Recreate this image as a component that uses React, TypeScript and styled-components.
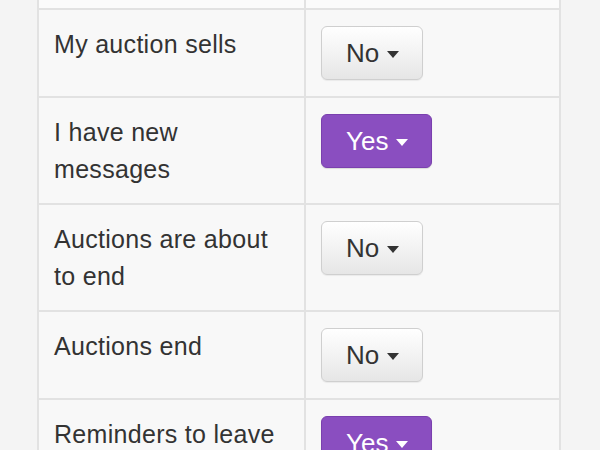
import * as React from 'react'
import styled, {createGlobalStyle} from 'styled-components'

const Global = createGlobalStyle`
  html, body {
    margin: 0;
    padding: 0;
    background: #f4f4f4;
    font-family: "Liberation Sans", Arial, Helvetica, sans-serif;
    color: #333;
  }
`

const Page = styled.div`
  height: 450px;
  overflow: hidden;
`

const Table = styled.div`
  margin-left: 37px;
  width: 524px;
  box-sizing: border-box;
  border-left: 2px solid #e2e2e2;
  border-right: 2px solid #e2e2e2;
`

const Row = styled.div<{$stub?: boolean}>`
  display: grid;
  grid-template-columns: 267px 1fr;
  border-bottom: 2px solid #e2e2e2;
  background: ${p => (p.$stub ? '#fbfbfb' : '#f8f8f8')};
  height: ${p => (p.$stub ? '8px' : 'auto')};
`

const Label = styled.div<{$empty?: boolean}>`
  border-right: 2px solid #e2e2e2;
  padding: ${p => (p.$empty ? '0' : '16px 14px 16px 15px')};
  font-size: 25px;
  letter-spacing: 0.3px;
  line-height: 36.5px;
`

const Control = styled.div`
  padding: 16px 16px 16px 15px;
`

const Toggle = styled.button<{$on: boolean}>`
  display: inline-flex;
  align-items: center;
  box-sizing: border-box;
  height: 54px;
  padding: 0 23px 0 24px;
  border-radius: 6px;
  font-family: inherit;
  font-size: 26px;
  line-height: 36px;
  cursor: pointer;
  border: 1px solid ${p => (p.$on ? '#7a40ae' : '#cfcfcf')};
  color: ${p => (p.$on ? '#fff' : '#333')};
  background: ${p => (p.$on ? '#8a4ec0' : 'linear-gradient(to bottom, #ffffff 0%, #e6e6e6 100%)')};
  box-shadow: ${p => (p.$on ? '0 1px 1px rgba(0,0,0,0.12)' : 'inset 0 1px 0 rgba(255,255,255,0.15), 0 1px 1px rgba(0,0,0,0.06)')};
`

const Caret = styled.span`
  display: inline-block;
  width: 0;
  height: 0;
  margin-left: 8px;
  margin-top: 2px;
  border-top: 7px solid currentColor;
  border-left: 6.5px solid transparent;
  border-right: 6.5px solid transparent;
`

const settings: {label: string; on: boolean}[] = [
  {label: 'My auction sells', on: false},
  {label: 'I have new messages', on: true},
  {label: 'Auctions are about to end', on: false},
  {label: 'Auctions end', on: false},
  {label: 'Reminders to leave feedback', on: true},
]

export default function App() {
  return (
    <Page>
      <Global />
      <Table>
        <Row $stub={true}>
          <Label $empty={true} />
          <div />
        </Row>
        {settings.map(s => (
          <Row key={s.label}>
            <Label>{s.label}</Label>
            <Control>
              <Toggle $on={s.on}>
                {s.on ? 'Yes' : 'No'}
                <Caret />
              </Toggle>
            </Control>
          </Row>
        ))}
      </Table>
    </Page>
  )
}
